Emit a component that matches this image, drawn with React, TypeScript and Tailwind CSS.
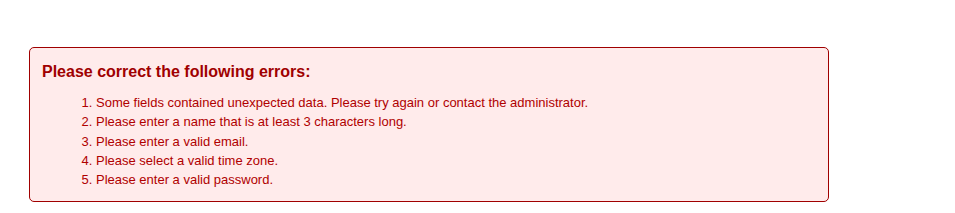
export default function App() {
  const items = [
    "Some fields contained unexpected data. Please try again or contact the administrator.",
    "Please enter a name that is at least 3 characters long.",
    "Please enter a valid email.",
    "Please select a valid time zone.",
    "Please enter a valid password.",
  ];
  return (
    <div className="w-[955px] h-[213px] bg-white pt-[47px] pl-[29px]" style={{ fontFamily: '"Liberation Sans", Arial, sans-serif' }}>
      <div className="w-[800px] border border-[#a00000] rounded-[5px] bg-[#ffebeb] px-[12px] pt-[14px] pb-[12px] text-[#b00000]">
        <h2 className="text-[16px] leading-[19px] font-bold text-[#a00000]">Please correct the following errors:</h2>
        <ol className="list-decimal pl-[54px] mt-[12px] text-[13px] leading-[19.25px]">
          {items.map((t) => (
            <li key={t}>{t}</li>
          ))}
        </ol>
      </div>
    </div>
  );
}
